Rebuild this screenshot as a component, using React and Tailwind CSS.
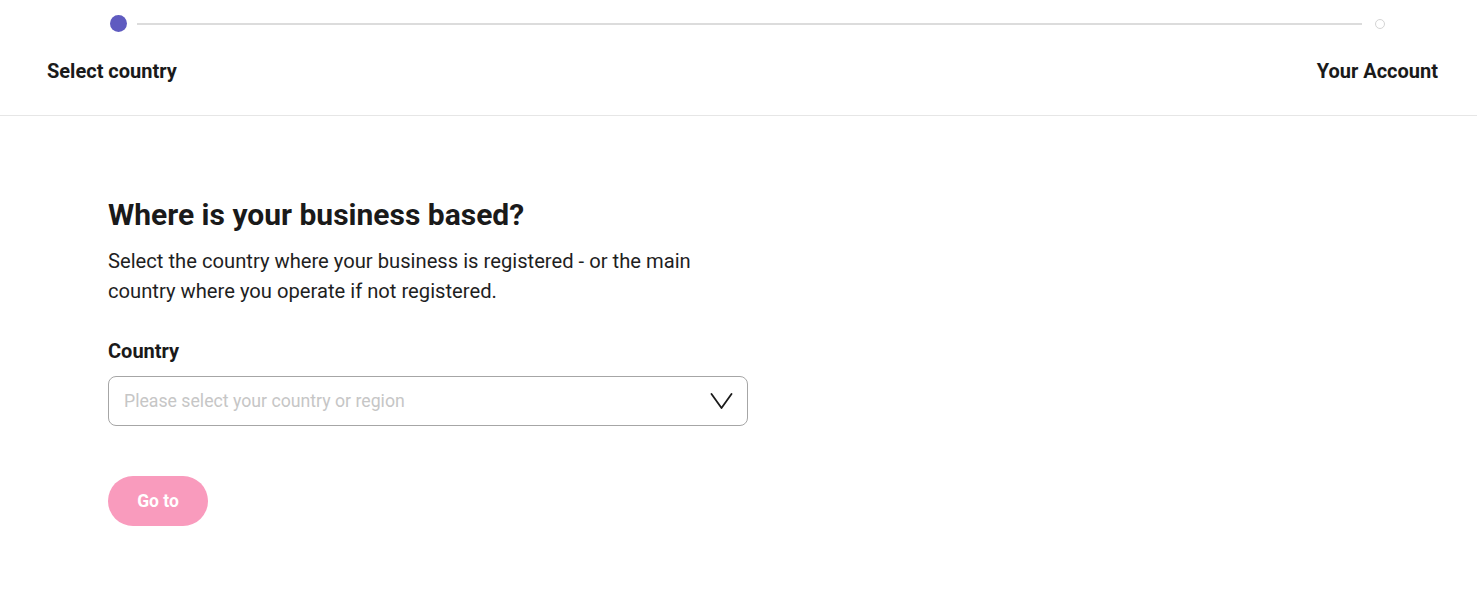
import React from "react"

const font = { fontFamily: "Roboto, 'Noto Sans', Arial, sans-serif" }

export default function App() {
  return (
    <div className="min-h-screen bg-white text-[#1a1a1a]" style={font}>
      {/* Stepper */}
      <div className="border-b border-[#e6e6e6] h-[116px]">
        <div className="flex items-center pl-[110px] pr-[92px] pt-[15px]">
          <div className="w-[17px] h-[17px] rounded-full bg-[#5f5bc0] shrink-0"></div>
          <div className="flex-1 h-[2px] bg-[#dcdcdc] ml-[10px] mr-[13px]"></div>
          <div className="w-[10px] h-[10px] rounded-full border border-[#d4d4d4] bg-white shrink-0"></div>
        </div>
        <div className="flex justify-between pl-[47px] pr-[39px] mt-[27px]">
          <span className="text-[20px] leading-[24px] font-bold">Select country</span>
          <span className="text-[20px] leading-[24px] font-bold">Your Account</span>
        </div>
      </div>

      {/* Content */}
      <div className="pl-[108px] pt-[80px]">
        <h1 className="text-[30px] leading-[38px] font-bold">Where is your business based?</h1>
        <p className="mt-[12px] text-[20.2px] leading-[30px] max-w-[610px] text-[#1f1f1f]">
          Select the country where your business is registered - or the main country where you operate if not registered.
        </p>

        <label className="block mt-[33px] text-[20px] leading-[24px] font-bold">Country</label>
        <div className="mt-[13px] w-[640px] h-[50px] rounded-[8px] border border-[#a6a6a6] flex items-center justify-between pl-[15px] pr-[15px]">
          <span className="text-[17.7px] text-[#c6c6c6]">Please select your country or region</span>
          <svg width="23" height="16" viewBox="0 0 23 16" fill="none" className="mr-[-1px]">
            <path d="M1.5 1L11.5 15L21.5 1" stroke="#1a1a1a" strokeWidth="1.8" strokeLinecap="round" strokeLinejoin="round" />
          </svg>
        </div>

        <button className="mt-[50px] w-[100px] h-[50px] rounded-full bg-[#f99bbd] text-white text-[17.5px] font-bold">
          Go to
        </button>
      </div>
    </div>
  )
}
